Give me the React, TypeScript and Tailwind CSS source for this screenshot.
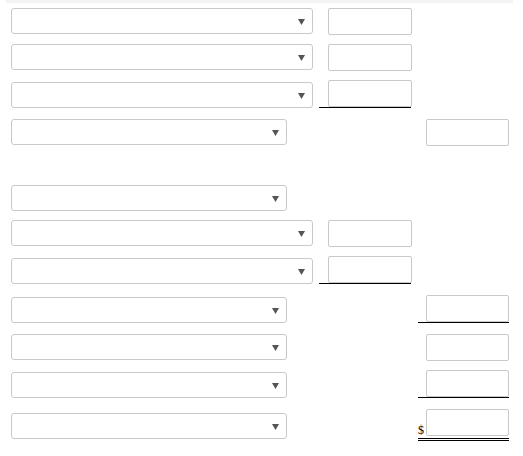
import React from 'react';

type Row = {
  top: number;
  h: number;
  sel: 'wide' | 'narrow';
  selOff: number;
  mid?: { off: number; line?: boolean };
  right?: { off: number; line?: 'single' | 'double' };
};

const ROWS: Row[] = [
  { top: 8, h: 36, sel: 'wide', selOff: 0, mid: { off: 0 } },
  { top: 44, h: 36, sel: 'wide', selOff: 0, mid: { off: 0 } },
  { top: 80, h: 39, sel: 'wide', selOff: 2, mid: { off: 0, line: true } },
  { top: 119, h: 66, sel: 'narrow', selOff: 0, right: { off: 0 } },
  { top: 185, h: 35, sel: 'narrow', selOff: 0 },
  { top: 220, h: 36, sel: 'wide', selOff: 0, mid: { off: 0 } },
  { top: 256, h: 39, sel: 'wide', selOff: 2, mid: { off: 0, line: true } },
  { top: 295, h: 39, sel: 'narrow', selOff: 2, right: { off: 0, line: 'single' } },
  { top: 334, h: 36, sel: 'narrow', selOff: 0, right: { off: 0 } },
  { top: 370, h: 39, sel: 'narrow', selOff: 2, right: { off: 0, line: 'single' } },
  { top: 409, h: 47, sel: 'narrow', selOff: 4, right: { off: 0, line: 'double' } },
];

function Select({ wide }: { wide: boolean }) {
  return (
    <div
      className={`relative h-[26px] rounded-[3px] border border-[#c9c9c9] bg-white ${
        wide ? 'w-[302px]' : 'w-[276px]'
      }`}
    >
      <svg className="absolute right-[7px] top-[10px] w-[7px] h-[6px]" viewBox="0 0 7 6">
        <polygon points="0,0 7,0 3.5,6" fill="#555" />
      </svg>
    </div>
  );
}

function Box() {
  return <div className="w-[84px] h-[27px] rounded-[2px] border border-[#c9c9c9] bg-white" />;
}

export default function App() {
  return (
    <div className="w-[523px] h-[456px] bg-white overflow-hidden font-['Liberation_Serif',serif]">
      <div className="h-[3px] ml-[6px] mr-[10px] bg-[#f3f3f3]" />
      <div className="h-[5px]" />
      {ROWS.map((r, i) => (
        <div key={i} className="flex items-start" style={{ height: r.h }}>
          <div className="w-[319px] pl-[11px] shrink-0" style={{ paddingTop: r.selOff }}>
            <Select wide={r.sel === 'wide'} />
          </div>
          <div className="w-[92px] shrink-0">
            {r.mid && (
              <div className={`pl-[9px] ${r.mid.line ? 'border-b border-black' : ''}`}>
                <Box />
              </div>
            )}
          </div>
          <div className="w-[7px] shrink-0" />
          <div className="w-[91px] shrink-0">
            {r.right && (
              <div
                className={`flex items-end ${
                  r.right.line === 'single'
                    ? 'border-b border-black'
                    : r.right.line === 'double'
                    ? 'border-b-[3px] border-double border-black pb-[2px]'
                    : ''
                }`}
              >
                <span className="w-[8px] text-[12px] leading-[12px] text-black">
                  {r.right.line === 'double' ? '$' : ''}
                </span>
                <Box />
              </div>
            )}
          </div>
        </div>
      ))}
    </div>
  );
}
